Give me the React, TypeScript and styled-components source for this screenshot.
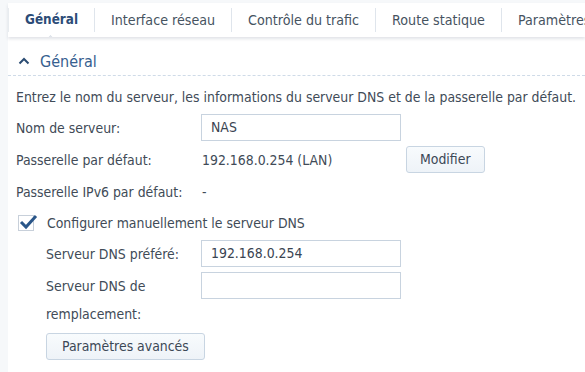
import React from 'react'
import styled, { createGlobalStyle } from 'styled-components'

const GlobalStyle = createGlobalStyle`
  html, body {
    margin: 0;
    padding: 0;
    background: #ffffff;
  }
  body {
    font-family: "DejaVu Sans Condensed", "DejaVu Sans", Verdana, sans-serif;
    font-size: 13.9px;
    color: #414b57;
  }
`

const Page = styled.div`
  width: 585px;
  height: 372px;
  overflow: hidden;
  background: #f6f8fa;
  padding-top: 3px;
  box-sizing: border-box;
`

const Panel = styled.div`
  margin-left: 8px;
  background: #fff;
  height: 100%;
`

const TabBar = styled.div`
  position: relative;
  display: flex;
  align-items: center;
  height: 34px;
  background: #fff;
  box-shadow: 0 2px 3px rgba(40, 60, 90, 0.14);
  white-space: nowrap;
  overflow: hidden;
`

const Tab = styled.div<{ $active?: boolean }>`
  position: relative;
  flex-shrink: 0;
  padding: 0 16px;
  line-height: 24px;
  font-size: ${(p) => (p.$active ? '13.4px' : '14.15px')};
  color: ${(p) => (p.$active ? '#2c4c77' : '#46535f')};
  font-weight: ${(p) => (p.$active ? 'bold' : 'normal')};
  border-left: 1px solid #dfe5ec;

  &:first-child {
    border-left-color: #e8ecf0;
  }
`

const Notch = styled.span`
  position: absolute;
  left: 38px;
  bottom: -9px;
  width: 8px;
  height: 8px;
  background: #fff;
  border-left: 1px solid #d8dee6;
  border-top: 1px solid #d8dee6;
  transform: rotate(45deg);
`

const Body = styled.div`
  padding: 10px 0 0 0;
`

const SectionHead = styled.div`
  display: flex;
  align-items: center;
  gap: 10px;
  height: 28px;
  padding-left: 10px;
  font-size: 16px;
  color: #36608f;
  border-bottom: 1px dashed #cfdbe8;
`

const Content = styled.div`
  padding: 12px 0 0 8px;
`

const Desc = styled.div`
  line-height: 18px;
  color: #3f4b58;
  margin-bottom: 8px;
  white-space: nowrap;
`

const Row = styled.div<{ $indent?: boolean }>`
  display: grid;
  grid-template-columns: ${(p) => (p.$indent ? '155px' : '185px')} 200px auto;
  align-items: center;
  min-height: 27px;
  margin-left: ${(p) => (p.$indent ? '30px' : '0')};
  margin-bottom: 5px;
`

const Label = styled.div`
  line-height: 28px;
  align-self: start;
`

const Input = styled.div<{ $top?: boolean }>`
  box-sizing: border-box;
  width: 200px;
  height: 27px;
  border: 1px solid #c8d3df;
  padding: 0 9px;
  line-height: 25px;
  color: #3a4451;
  align-self: ${(p) => (p.$top ? 'start' : 'center')};
`

const Value = styled.div`
  padding-left: 1px;
`

const Button = styled.div<{ $gap?: number; $pad?: number }>`
  box-sizing: border-box;
  justify-self: start;
  height: 27px;
  padding: 0 ${(p) => p.$pad ?? 14}px;
  margin-left: ${(p) => p.$gap ?? 0}px;
  line-height: 25px;
  border: 1px solid #c8d5e2;
  border-radius: 3px;
  background: linear-gradient(#f8fbfd, #eef3f8);
  color: #3c4856;
  white-space: nowrap;
`

const CheckRow = styled.div`
  display: flex;
  align-items: center;
  gap: 13px;
  height: 28px;
  margin: -1px 0 3px 2px;
`

const Box = styled.span`
  position: relative;
  width: 14px;
  height: 14px;
  border: 1px solid #c8d0da;
  background: #fff;
`

const Tick = styled.svg`
  position: absolute;
  left: 0;
  top: -3px;
`

export default function App() {
  return (
    <>
      <GlobalStyle />
      <Page>
        <Panel>
          <TabBar>
            <Tab $active>Général</Tab>
            <Tab>Interface réseau</Tab>
            <Tab>Contrôle du trafic</Tab>
            <Tab>Route statique</Tab>
            <Tab>Paramètres</Tab>
            <Notch />
          </TabBar>
          <Body>
            <SectionHead>
              <svg width="12" height="8" viewBox="0 0 12 8">
                <path d="M1.5 6.5 L6 2 L10.5 6.5" fill="none" stroke="#2b4c73" strokeWidth="2" />
              </svg>
              Général
            </SectionHead>
            <Content>
              <Desc>
                Entrez le nom du serveur, les informations du serveur DNS et de la passerelle par défaut.
              </Desc>
              <Row>
                <div>Nom de serveur:</div>
                <Input>NAS</Input>
              </Row>
              <Row>
                <div>Passerelle par défaut:</div>
                <Value>192.168.0.254 (LAN)</Value>
                <Button $gap={5} $pad={13}>Modifier</Button>
              </Row>
              <Row>
                <div>Passerelle IPv6 par défaut:</div>
                <Value>-</Value>
              </Row>
              <CheckRow>
                <Box>
                  <Tick width="20" height="18" viewBox="0 0 20 18">
                    <path d="M2 9 L7 14 L17 3" fill="none" stroke="#2a5689" strokeWidth="3" />
                  </Tick>
                </Box>
                Configurer manuellement le serveur DNS
              </CheckRow>
              <Row $indent>
                <div>Serveur DNS préféré:</div>
                <Input>192.168.0.254</Input>
              </Row>
              <Row $indent>
                <Label>
                  Serveur DNS de
                  <br />
                  remplacement:
                </Label>
                <Input $top />
              </Row>
              <Row $indent>
                <Button $pad={15}>Paramètres avancés</Button>
              </Row>
            </Content>
          </Body>
        </Panel>
      </Page>
    </>
  )
}
